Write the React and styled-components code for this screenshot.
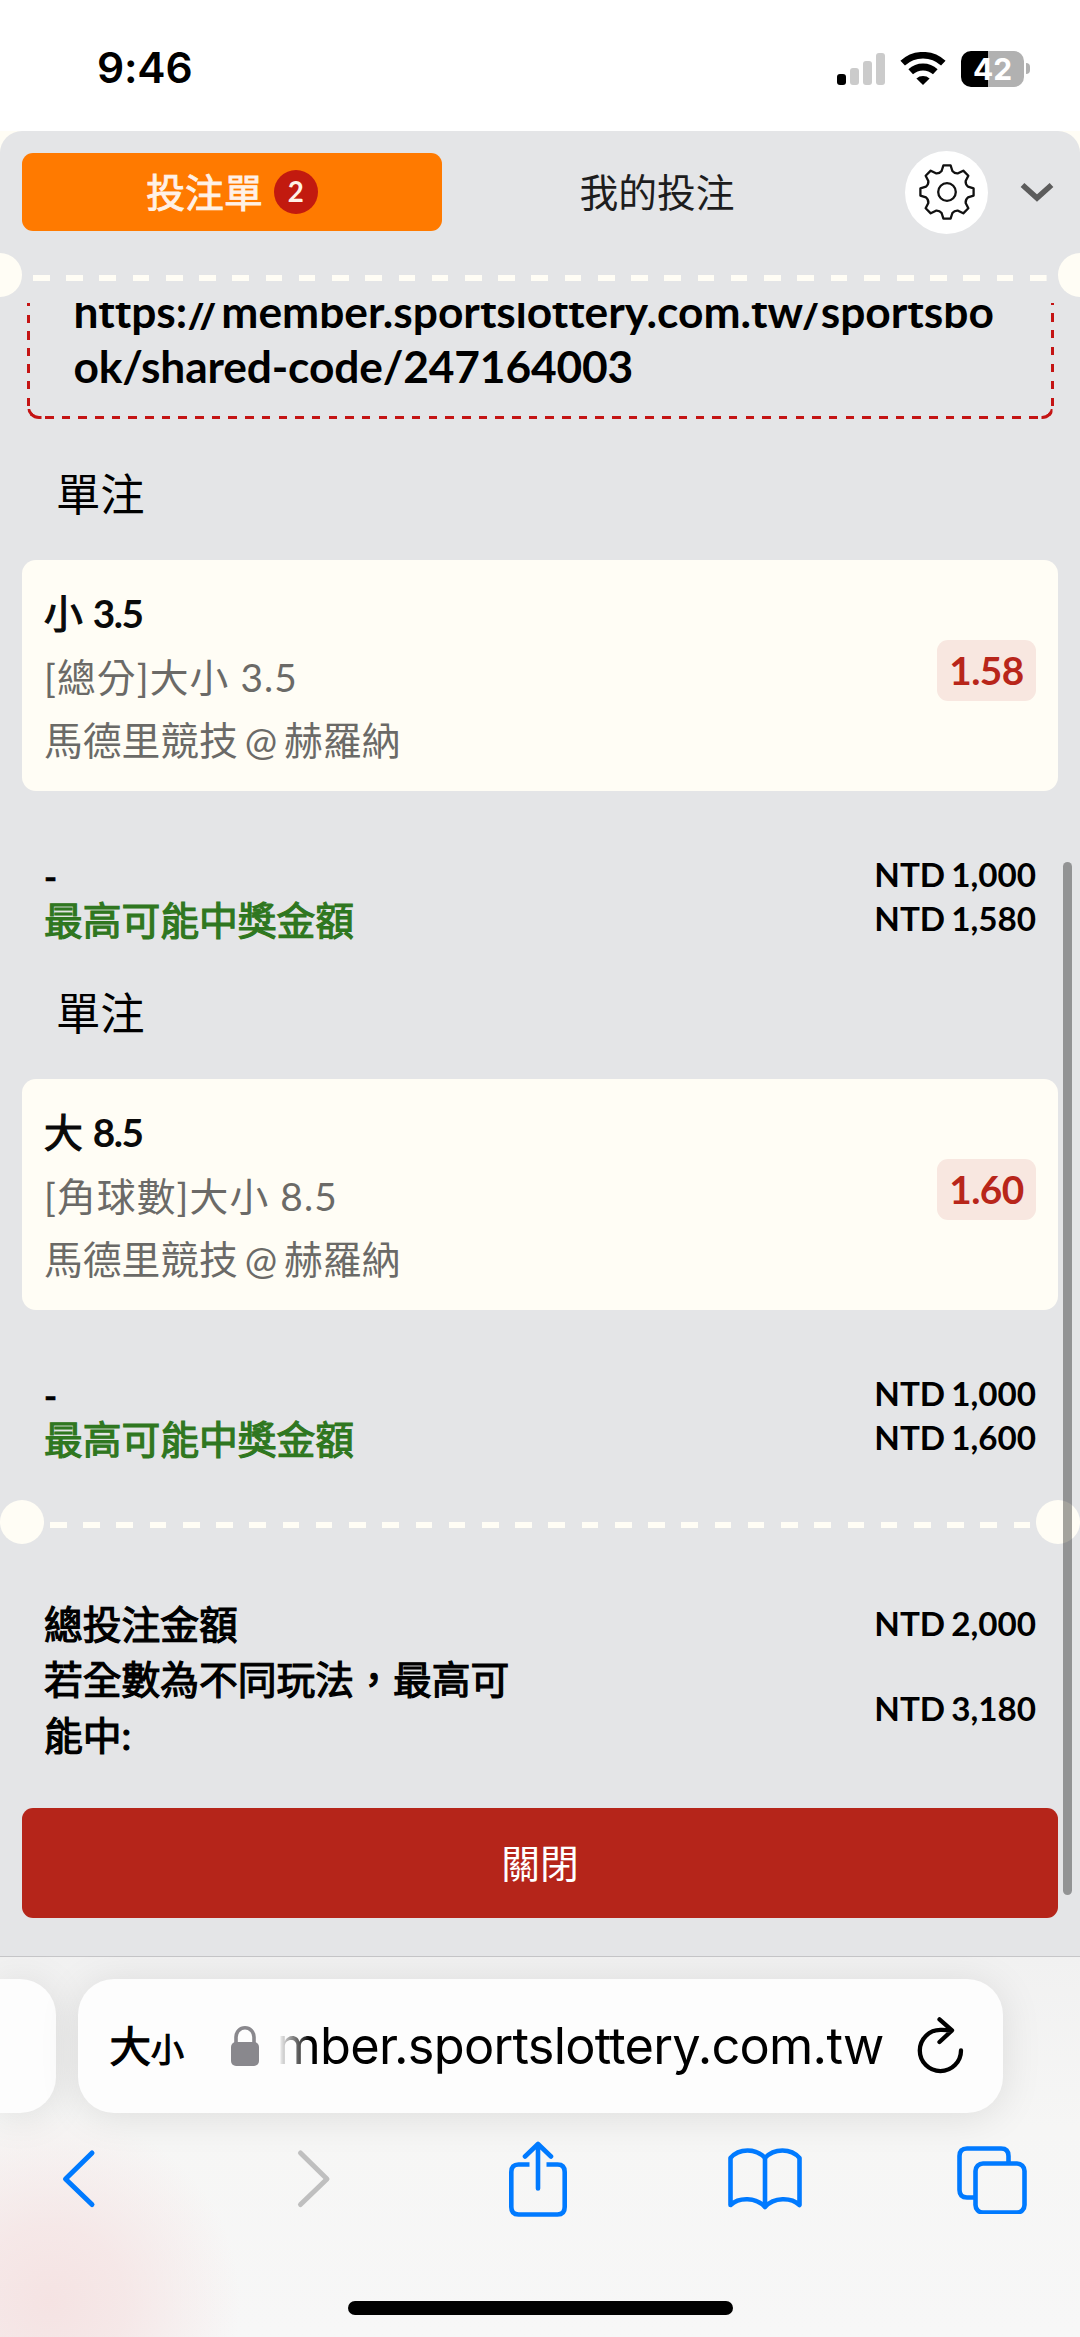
import styled, { createGlobalStyle, css } from "styled-components";

const GlobalStyle = createGlobalStyle`
  * {
    box-sizing: border-box;
  }

  body {
    margin: 0;
    background: #fff;
    font-family: Lato, "Noto Sans CJK TC", sans-serif;
    font-variant-ligatures: none;
  }
`;

// medium weight for chinese text
const medium = css`
  font-weight: 400;
  -webkit-text-stroke: ${(props) => props.$stroke || 1.2}px currentColor;
`;

const Phone = styled.div`
  width: 1080px;
  height: 2337px;
  display: flex;
  flex-direction: column;
  overflow: hidden;
`;

/* status bar */

const StatusBar = styled.header`
  height: 131px;
  flex: none;
  display: flex;
  justify-content: space-between;
  align-items: center;
  padding: 6px 50px 0 97px;
  background: #fff;
`;

const Time = styled.span`
  font: 600 42.5px/1 Inter, sans-serif;
  letter-spacing: -0.2px;
`;

const StatusIcons = styled.div`
  display: flex;
  align-items: center;
`;

const Signal = styled.div`
  display: flex;
  align-items: flex-end;
  gap: 4px;
  margin-right: 15px;
`;

const SignalBar = styled.i`
  width: 9px;
  height: ${(props) => props.$h}px;
  border-radius: 3px;
  background: ${(props) => (props.$on ? "#000" : "#cbcbcb")};
`;

const Battery = styled.div`
  width: 63px;
  height: 36px;
  margin-left: 15px;
  border-radius: 10px;
  background: linear-gradient(90deg, #000 27px, #b1b1b1 27px);
  color: #fff;
  font: 700 30px/37px Inter, sans-serif;
  text-align: center;
`;

const BatteryCap = styled.i`
  width: 4px;
  height: 11px;
  margin-left: 2px;
  border-radius: 0 5px 5px 0;
  background: #b1b1b1;
`;

/* bet slip */

const Backdrop = styled.div`
  height: 1825px;
  flex: none;
  background: #fffdf5;
`;

const Sheet = styled.main`
  position: relative;
  height: 100%;
  overflow: hidden;
  border-radius: 22px 22px 0 0;
  background: #e4e5e7;
`;

const Tabs = styled.nav`
  height: 122px;
  display: flex;
  align-items: center;
  padding: 0 26px 0 22px;
`;

const Tab = styled.div`
  display: flex;
  align-items: center;
  justify-content: center;
  gap: 11px;
  width: ${(props) => (props.$active ? 420 : 430)}px;
  height: 78px;
  border-radius: 11px;
  font-size: 38.77px;
  line-height: 1;
  color: #1d1d1d;

  ${(props) =>
    props.$active &&
    css`
      ${medium}
      background: #ff7a00;
      color: #fff1e6;
    `}
`;

const Count = styled.span`
  width: 44px;
  height: 44px;
  border-radius: 50%;
  background: #c21a0f;
  font-size: 27.7px;
  font-weight: 700;
  line-height: 44px;
  text-align: center;
  -webkit-text-stroke: 0;
`;

const SettingsButton = styled.button`
  width: 83px;
  height: 83px;
  margin: 0 32px 0 33px;
  padding: 0;
  border: 0;
  border-radius: 50%;
  background: #fff;
  display: grid;
  place-items: center;
`;

const Perforation = styled.div`
  display: flex;
  justify-content: space-between;
  height: 44px;
  margin: 0 ${(props) => (props.$bleed ? -22 : 0)}px;
  background: repeating-linear-gradient(
      90deg,
      #fffdf5 0 16.61px,
      transparent 16.61px 33.23px
    )
    ${(props) => (props.$bleed ? 55.3 : 50)}px 22px /
    ${(props) => (props.$bleed ? 1013.6 : 980)}px 6px no-repeat;

  &::before,
  &::after {
    content: "";
    width: 44px;
    height: 44px;
    border-radius: 50%;
    background: #fffdf5;
  }
`;

const Scroll = styled.div`
  height: 1653px;
  margin-top: 6px;
  overflow: hidden;
`;

const dash = (deg, pitch) =>
  `repeating-linear-gradient(${deg}deg, #c41414 0 8.5px, transparent 8.5px ${pitch}px)`;

const ShareBox = styled.div`
  position: relative;
  margin: -20px 26.5px 0;
  height: 136px;
  padding: 0 0 0 47px;
  font-size: 44.3px;
  font-weight: 700;
  line-height: 55.38px;
  white-space: nowrap;
  background: ${dash(0, 16.6)} 0 -13px / 3px 136px no-repeat,
    ${dash(0, 16.9)} 100% -13px / 3px 136px no-repeat,
    ${dash(90, 16.68)} 18px 100% / 993px 3px no-repeat;

  &::before,
  &::after {
    content: "";
    position: absolute;
    bottom: 0;
    width: 12px;
    height: 12px;
    border: 0 solid #c41414;
    border-bottom-width: 3px;
  }

  &::before {
    left: 0;
    border-left-width: 3px;
    border-bottom-left-radius: 12px;
    clip-path: inset(5px 0 0 1px);
  }

  &::after {
    right: 0;
    border-right-width: 3px;
    border-bottom-right-radius: 12px;
    clip-path: inset(5px 1px 0 3px);
  }
`;

const Track = styled.span`
  letter-spacing: ${(props) => props.$by}px;
`;

const SectionTitle = styled.h2`
  height: 141px;
  margin: 0;
  padding: 10px 56px 0;
  display: flex;
  align-items: center;
  font-size: 44.3px;
  font-weight: 400;
  line-height: 1;
`;

const Card = styled.section`
  display: flex;
  justify-content: space-between;
  height: 231px;
  margin: 0 22px;
  padding: 22px 22px 0;
  border-radius: 14px;
  background: #fffdf5;
`;

const Line = styled.div`
  font-size: 38.77px;
  line-height: 63.6px;
  white-space: nowrap;
  color: #6b6a67;
  letter-spacing: ${(props) => props.$spacing || 0}px;
  word-spacing: ${(props) => props.$gap || 0}px;
`;

const Pick = styled(Line)`
  ${medium}
  color: #0a0a0a;

  b {
    letter-spacing: -1.4px;
    -webkit-text-stroke: 0;
  }
`;

const Odds = styled.div`
  width: 99px;
  height: 61px;
  margin-top: 58px;
  border-radius: 11px;
  background: #f8e7e0;
  color: #b8261a;
  font-size: 38.77px;
  font-weight: 700;
  letter-spacing: -0.5px;
  line-height: 61px;
  text-align: center;
`;

const Summary = styled.div`
  display: flex;
  justify-content: space-between;
  height: 147px;
  padding: 61px 44px 0;
`;

const Stake = styled.div`
  height: 46px;
  font-size: 35px;
  font-weight: 700;
  line-height: 49px;
  -webkit-text-stroke: 0.6px currentColor;
`;

const MaxWin = styled.div`
  ${medium}
  color: #2f7720;
  font-size: 38.77px;
  line-height: 45.3px;
`;

const Amount = styled.div`
  font-size: 33.23px;
  font-weight: 700;
  line-height: 44.3px;
  text-align: right;
  white-space: nowrap;
  word-spacing: -2px;
`;

const Totals = styled.div`
  padding: 53px 44px 0;
`;

const TotalRow = styled.div`
  display: flex;
  justify-content: space-between;
  align-items: center;

  &:first-child > :last-child {
    margin-bottom: 4px;
  }
`;

const TotalLabel = styled.div`
  ${medium}
  width: 485px;
  font-size: 38.77px;
  line-height: 55.38px;
`;

const SlipFooter = styled.div`
  padding-top: 43px;
`;

const CloseButton = styled.button`
  display: block;
  width: 1036px;
  height: 110px;
  margin: 45px 22px 0;
  padding: 0;
  border: 0;
  border-radius: 11px;
  background: #b5251a;
  color: #fff;
  font: 400 38.77px/110px Lato, "Noto Sans CJK TC", sans-serif;
`;

const ScrollThumb = styled.div`
  position: absolute;
  top: 731px;
  right: 8px;
  width: 9px;
  height: 1033px;
  border-radius: 5px;
  background: rgba(0, 0, 0, 0.355);
`;

/* browser chrome */

const Browser = styled.footer`
  flex: 1;
  display: flex;
  flex-direction: column;
  border-top: 1px solid #c6c6c8;
  background: radial-gradient(
      circle 190px at 50px 345px,
      #f5e3e3 0,
      rgba(245, 227, 227, 0.75) 40%,
      rgba(245, 227, 227, 0) 100%
    ),
    linear-gradient(#f1f1f1, #f6f6f5 45%, #f7f7f7);
`;

const AddressRow = styled.div`
  display: flex;
  gap: 22px;
  height: 134px;
  margin-top: 22px;
`;

const AddressBar = styled.div`
  display: flex;
  align-items: center;
  width: 925px;
  padding-left: 32px;
  border-radius: 36px;
  background: #fdfdfd;
  box-shadow: 0 4px 40px rgba(0, 0, 0, 0.1);
`;

const PreviousTab = styled(AddressBar)`
  width: 55.5px;
  padding: 0;
  border-radius: 0 36px 36px 0;
`;

const TextSize = styled.div`
  ${medium}
  display: flex;
  align-items: baseline;
  width: 121px;
  padding-bottom: 2px;
  font-family: "Noto Sans CJK TC", sans-serif;
  font-size: 41.5px;
  line-height: 1;

  small {
    font-size: 33px;
  }
`;

const Host = styled.div`
  display: flex;
  justify-content: flex-end;
  width: 606px;
  margin: 0 32px 0 19px;
  overflow: hidden;
  font: 400 50.5px/70px Inter, sans-serif;
  letter-spacing: -0.75px;
  white-space: nowrap;
  mask-image: linear-gradient(90deg, transparent 0, #000 32px);
`;

const Toolbar = styled.div`
  display: grid;
  grid-template-columns: 235px 213.7px 219.3px 229px 70px;
  align-items: center;
  height: 80px;
  margin: 26px 0 0 60px;
`;

const HomeIndicator = styled.div`
  width: 385px;
  height: 14px;
  margin: 82px auto 0;
  border-radius: 7px;
  background: #000;
`;

const Stroke = styled.svg.attrs({
  fill: "none",
  strokeLinecap: "round",
  strokeLinejoin: "round",
})`
  flex: none;
  display: block;
  stroke: ${(props) => props.$color || "#007aff"};
  stroke-width: ${(props) => props.$weight || 4.6};
`;

// one tooth and the valley after it, turned eight times round the centre
const gearPath = (() => {
  const turn = (x, y, a) =>
    (x * Math.cos(a) - y * Math.sin(a)).toFixed(2) +
    " " +
    (x * Math.sin(a) + y * Math.cos(a)).toFixed(2);
  let d = "";
  for (let i = 0; i < 8; i++) {
    const a = (i * Math.PI) / 4;
    const b = a + Math.PI / 4;
    d += `${i ? "L" : "M"}${turn(-3.6, -26.6, a)}L${turn(3.6, -26.6, a)}`;
    d += `L${turn(5.4, -21, a)}Q${turn(7.6, -18.3, a)} ${turn(-5.4, -21, b)}`;
  }
  return d + "Z";
})();

const bets = [
  { side: "小", line: "3.5", market: "[總分]大小", odds: "1.58", win: "1,580" },
  { side: "大", line: "8.5", market: "[角球數]大小", odds: "1.60", win: "1,600" },
];

function Bet({ bet }) {
  return (
    <>
      <SectionTitle>單注</SectionTitle>
      <Card>
        <div>
          <Pick>
            {bet.side} <b>{bet.line}</b>
          </Pick>
          <Line $spacing={1.1}>
            {bet.market} {bet.line}
          </Line>
          <Line $gap={-3}>馬德里競技 @ 赫羅納</Line>
        </div>
        <Odds>{bet.odds}</Odds>
      </Card>
      <Summary>
        <div>
          <Stake>-</Stake>
          <MaxWin>最高可能中獎金額</MaxWin>
        </div>
        <div>
          <Amount>NTD 1,000</Amount>
          <Amount>NTD {bet.win}</Amount>
        </div>
      </Summary>
    </>
  );
}

export default function App() {
  return (
    <Phone>
      <GlobalStyle />
      <StatusBar>
        <Time>9:46</Time>
        <StatusIcons>
          <Signal>
            <SignalBar $h={11} $on />
            <SignalBar $h={17} />
            <SignalBar $h={24} />
            <SignalBar $h={32} />
          </Signal>
          <svg width="46" height="34" viewBox="-23 -33 46 34" fill="none">
            <path d="M-20.3 -21.8A29.8 29.8 0 0 1 20.3 -21.8" stroke="#000" strokeWidth="6.6" />
            <path d="M-12.3 -13.2A18.1 18.1 0 0 1 12.3 -13.2" stroke="#000" strokeWidth="6.8" />
            <path d="M0 0L-6.6 -6.6A10 10 0 0 1 6.6 -6.6Z" fill="#000" />
          </svg>
          <Battery>42</Battery>
          <BatteryCap />
        </StatusIcons>
      </StatusBar>

      <Backdrop>
        <Sheet>
          <Tabs>
            <Tab $active $stroke={0.9}>
              投注單 <Count>2</Count>
            </Tab>
            <Tab>我的投注</Tab>
            <SettingsButton>
              <Stroke width="58" height="58" viewBox="-29 -29 58 58" $color="#111" $weight={2.3}>
                <path d={gearPath} />
                <circle r="8.8" />
              </Stroke>
            </SettingsButton>
            <Stroke width="34" height="20" $color="#5c5c5c" $weight={5.6}>
              <path d="M2.5 3L17 16L31.5 3" strokeLinecap="butt" strokeLinejoin="miter" />
            </Stroke>
          </Tabs>
          <Perforation $bleed />

          <Scroll>
            <ShareBox>
              https:<Track $by={1.6}>//</Track>member.sportslottery.com.tw/sportsbo
              <br />
              <Track $by={-0.15}>ok/shared-code/247164003</Track>
            </ShareBox>
            {bets.map((bet) => (
              <Bet key={bet.line} bet={bet} />
            ))}
            <SlipFooter>
              <Perforation />
              <Totals>
                <TotalRow>
                  <TotalLabel>總投注金額</TotalLabel>
                  <Amount>NTD 2,000</Amount>
                </TotalRow>
                <TotalRow>
                  <TotalLabel>若全數為不同玩法，最高可能中:</TotalLabel>
                  <Amount>NTD 3,180</Amount>
                </TotalRow>
              </Totals>
              <CloseButton>關閉</CloseButton>
            </SlipFooter>
          </Scroll>
          <ScrollThumb />
        </Sheet>
      </Backdrop>

      <Browser>
        <AddressRow>
          <PreviousTab />
          <AddressBar>
            <TextSize>
              大<small>小</small>
            </TextSize>
            <svg width="28" height="40" fill="none">
              <rect y="16" width="28" height="24" rx="5" fill="#89888d" />
              <path d="M5 18V11A9 9.2 0 0 1 23 11V18" stroke="#89888d" strokeWidth="3.6" />
            </svg>
            <Host>mber.sportslottery.com.tw</Host>
            <Stroke width="48" height="58" $color="#000" $weight={4.3}>
              <path d="M45 33.5A20.6 20.6 0 1 1 24.4 12.9Q30 12.8 35.5 13.4M23.5 2.4L36 13.4L23.5 25" />
            </Stroke>
          </AddressBar>
        </AddressRow>

        <Toolbar>
          <Stroke width="38" height="62" $weight={5}>
            <path d="M32 5L5.5 31L32 56.5" />
          </Stroke>
          <Stroke width="38" height="62" $color="#bfbfbf" $weight={5}>
            <path d="M5.5 5L32 31L5.5 56.5" />
          </Stroke>
          <Stroke width="58" height="76">
            <path d="M20.5 23.5H9.5Q2.3 23.5 2.3 31V66Q2.3 73.5 9.5 73.5H48.5Q55.7 73.5 55.7 66V31Q55.7 23.5 48.5 23.5H37.5" strokeLinecap="butt" />
            <path d="M29 47.5V3.5M16 15.5L29 3L42 15.5" />
          </Stroke>
          <Stroke width="74" height="62">
            <path d="M37 59V10C28 0 11 0 2.5 10V57C11 49 28 49 37 59C46 49 63 49 71.5 57V10C63 0 46 0 37 10" />
          </Stroke>
          <Stroke width="70" height="70" viewBox="0 -2 70 70">
            <rect x="18.5" y="17.5" width="49" height="49" rx="7.5" />
            <path d="M18.5 51.5H10Q2.5 51.5 2.5 44V10Q2.5 2.5 10 2.5H44Q51.5 2.5 51.5 10V17.5" strokeLinecap="butt" />
          </Stroke>
        </Toolbar>
        <HomeIndicator />
      </Browser>
    </Phone>
  );
}
